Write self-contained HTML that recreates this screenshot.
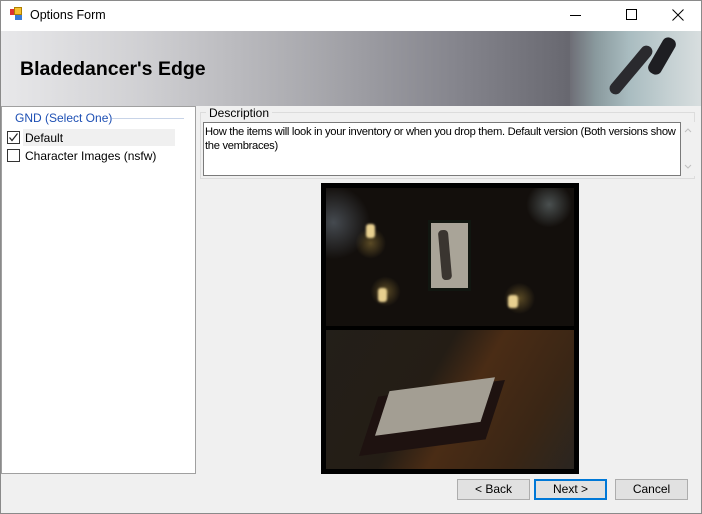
<!DOCTYPE html>
<html><head><style>
*{margin:0;padding:0;box-sizing:border-box}
body{width:702px;height:514px;background:#f0f0f0;font-family:"Liberation Sans",sans-serif;font-size:12px;position:relative;overflow:hidden;color:#000}
.a{position:absolute}
</style></head><body>
<div class="a" style="left:0;top:0;width:702px;height:514px;border:1px solid #8a8a8a"></div>
<div class="a" style="left:1px;top:1px;width:700px;height:30px;background:#fff"></div>
<div class="a" style="left:10px;top:9px;width:6px;height:6px;background:#d33"></div>
<div class="a" style="left:14px;top:7px;width:8px;height:8px;background:#f5c030;border:1px solid #b08000"></div>
<div class="a" style="left:15px;top:15px;width:7px;height:5px;background:#3a7bd5"></div>
<div class="a" style="left:30px;top:8px;font-size:12.5px">Options Form</div>
<div class="a" style="left:570px;top:15px;width:11px;height:1px;background:#000"></div>
<div class="a" style="left:626px;top:9px;width:11px;height:11px;border:1px solid #000"></div>
<svg class="a" style="left:672px;top:9px" width="12" height="12"><path d="M0.5 0.5L11.5 11.5M11.5 0.5L0.5 11.5" stroke="#000" stroke-width="1"/></svg>
<div class="a" style="left:1px;top:31px;width:700px;height:75px;background:linear-gradient(90deg,#e8e8ea 0%,#d0d0d3 20%,#a8a8ad 45%,#85858d 65%,#6e6e76 78%,#66666e 82%)"></div>
<div class="a" style="left:570px;top:31px;width:131px;height:75px;background:linear-gradient(90deg,#6e6e76,#8a9a9e 20%,#a9bcc0 45%,#c4d0d2 75%,#d8dedf)"></div>
<div class="a" style="left:625px;top:40px;width:12px;height:60px;background:#2a2a2e;transform:rotate(40deg);border-radius:6px"></div>
<div class="a" style="left:655px;top:36px;width:14px;height:40px;background:#1e1e22;transform:rotate(30deg);border-radius:6px"></div>
<div class="a" style="left:20px;top:58px;font-size:19.5px;font-weight:bold">Bladedancer's Edge</div>
<div class="a" style="left:1px;top:106px;width:195px;height:368px;background:#fff;border:1px solid #a0a0a0"></div>
<div class="a" style="left:15px;top:111px;color:#1e50b4">GND (Select One)</div>
<div class="a" style="left:112px;top:118px;width:72px;height:1px;background:#c8d4e8"></div>
<div class="a" style="left:23px;top:129px;width:152px;height:17px;background:#f0f0f0"></div>
<div class="a" style="left:7px;top:131px;width:13px;height:13px;border:1px solid #333;background:#fff"></div>
<svg class="a" style="left:8px;top:132px" width="11" height="11"><path d="M1.5 5.5L4 8.5L9.5 1.5" stroke="#222" stroke-width="1.2" fill="none"/></svg>
<div class="a" style="left:25px;top:131px">Default</div>
<div class="a" style="left:7px;top:149px;width:13px;height:13px;border:1px solid #333;background:#fff"></div>
<div class="a" style="left:25px;top:149px">Character Images (nsfw)</div>
<div class="a" style="left:200px;top:112px;width:495px;height:67px;border:1px solid #dcdcdc"></div>
<div class="a" style="left:206px;top:106px;background:#f0f0f0;padding:0 3px">Description</div>
<div class="a" style="left:203px;top:122px;width:478px;height:54px;border:1px solid #7a7a7a;background:#fff;padding:2px 1px;line-height:14px;font-size:11.2px;letter-spacing:-0.3px;white-space:nowrap;overflow:hidden">How the items will look in your inventory or when you drop them. Default version (Both versions show<br>the vembraces)</div>
<div class="a" style="left:681px;top:122px;width:14px;height:54px;background:#f0f0f0"></div>
<svg class="a" style="left:684px;top:127px" width="8" height="44"><path d="M1 5L4 2L7 5M1 38L4 41L7 38" stroke="#c0c0c0" fill="none"/></svg>
<div class="a" style="left:321px;top:183px;width:258px;height:291px;background:#000"></div>
<div class="a" style="left:326px;top:188px;width:248px;height:138px;background:radial-gradient(circle at 3% 25%,#454a50,transparent 14%),radial-gradient(circle at 90% 12%,#4a5050,transparent 9%),radial-gradient(circle at 18% 40%,#5a4a25,transparent 7%),radial-gradient(circle at 24% 75%,#5a4a25,transparent 7%),radial-gradient(circle at 78% 80%,#5a4a25,transparent 7%),#130f0c"></div>
<div class="a" style="left:366px;top:224px;width:9px;height:14px;background:#e8d090;border-radius:3px;filter:blur(1px)"></div>
<div class="a" style="left:378px;top:288px;width:9px;height:14px;background:#e8d090;border-radius:3px;filter:blur(1px)"></div>
<div class="a" style="left:508px;top:295px;width:10px;height:13px;background:#e8d090;border-radius:3px;filter:blur(1px)"></div>
<div class="a" style="left:428px;top:220px;width:43px;height:71px;background:#111610"></div>
<div class="a" style="left:431px;top:223px;width:37px;height:65px;background:#a9a498"></div>
<div class="a" style="left:440px;top:230px;width:10px;height:50px;background:#3a3530;border-radius:4px;transform:rotate(-5deg)"></div>
<div class="a" style="left:326px;top:330px;width:248px;height:139px;background:linear-gradient(120deg,#231f19 0%,#241d15 40%,#4a2c15 55%,#3a2615 80%,#2a2520)"></div>
<div class="a" style="left:372px;top:388px;width:120px;height:60px;background:#1e1210;transform:skewX(-25deg) rotate(-8deg)"></div>
<div class="a" style="left:385px;top:384px;width:100px;height:45px;background:#a39e93;transform:skewX(-25deg) rotate(-8deg)"></div>
<div class="a" style="left:457px;top:479px;width:73px;height:21px;border:1px solid #adadad;background:#e1e1e1;text-align:center;line-height:19px">&lt; Back</div>
<div class="a" style="left:534px;top:479px;width:73px;height:21px;border:2px solid #0078d7;background:#e1e1e1;text-align:center;line-height:17px">Next &gt;</div>
<div class="a" style="left:615px;top:479px;width:73px;height:21px;border:1px solid #adadad;background:#e1e1e1;text-align:center;line-height:19px">Cancel</div>
</body></html>
